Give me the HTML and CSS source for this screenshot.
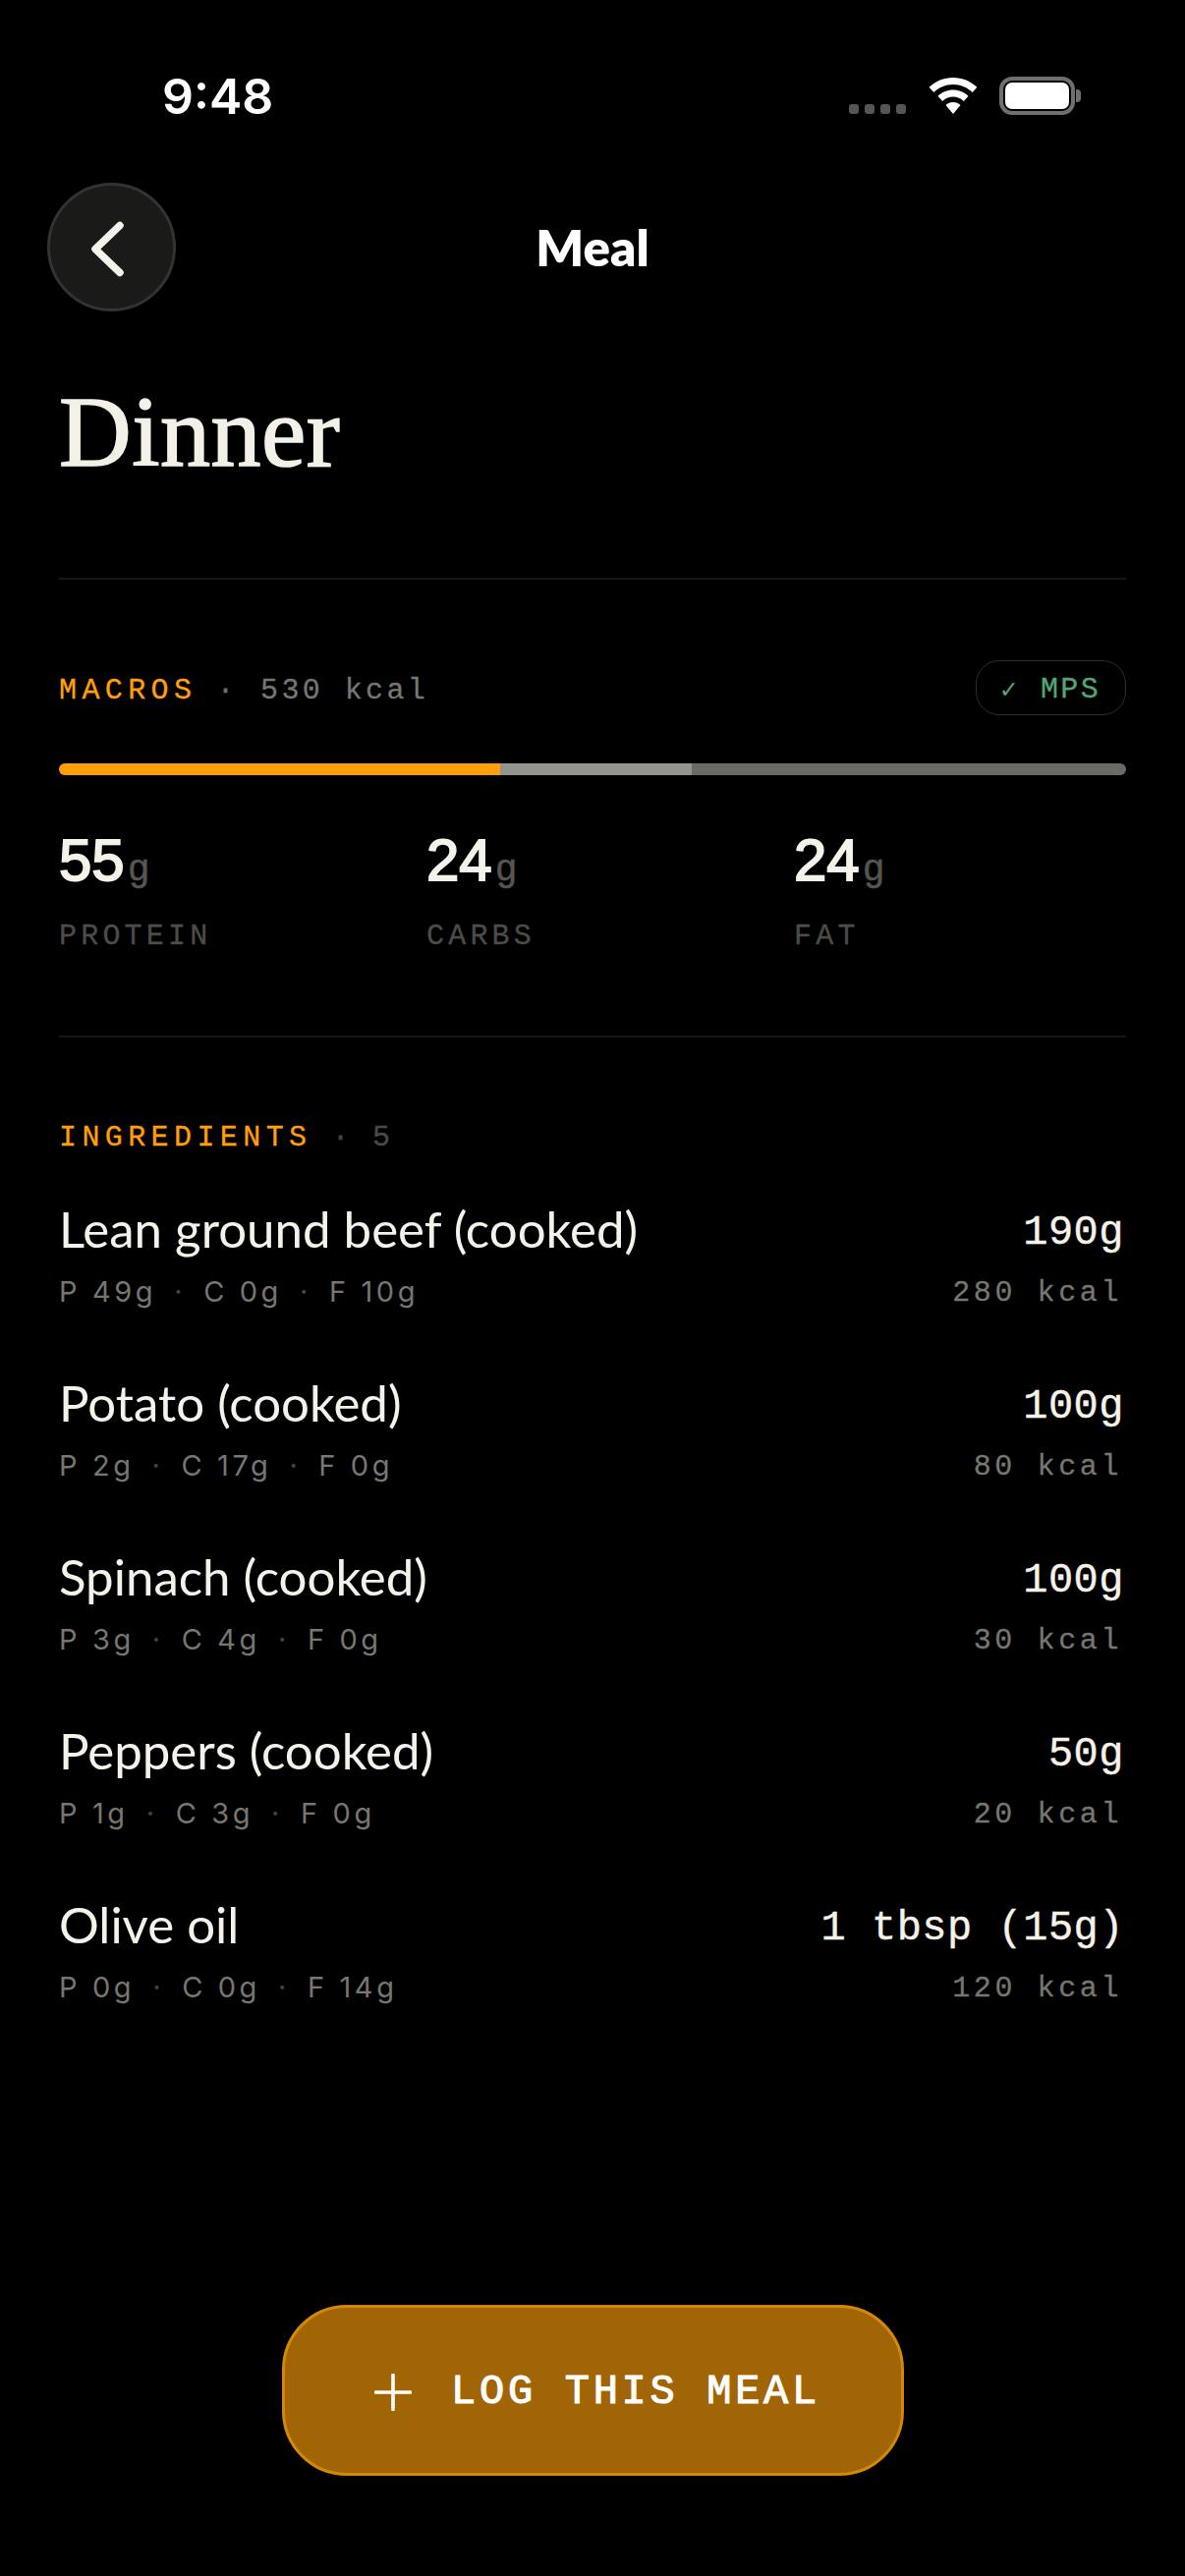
FILE: index.html
```html
<!DOCTYPE html>
<html lang="en">
<head>
<meta charset="utf-8">
<title>Meal</title>
<link rel="stylesheet" href="styles.css">
</head>
<body>
<div class="screen">
  <div class="status">
    <span class="time">9:48</span>
    <div class="status-icons">
      <div class="signal"><i></i><i></i><i></i><i></i></div>
      <svg class="wifi" width="50" height="37" viewBox="0 0 50 37"><path fill="#fff" d="M25 0C15.600 0 7 3.700.6 9.800l4.700 5.200C10.400 10.100 17.300 7 25 7s14.600 3.100 19.700 8l4.700-5.200C43 3.700 34.400 0 25 0Z"/><path fill="#fff" d="M25 12.500c-6 0-11.500 2.400-15.500 6.200l4.700 5.200C17 21.200 20.800 19.500 25 19.500s8 1.700 10.800 4.400l4.700-5.200c-4-3.800-9.500-6.200-15.500-6.200Z"/><path fill="#fff" d="M25 25c-2.900 0-5.600 1.100-7.500 3L25 37l7.500-9c-1.900-1.900-4.600-3-7.500-3Z"/></svg>
      <div class="battery"><div class="battery-body"><div class="battery-fill"></div></div><div class="battery-cap"></div></div>
    </div>
  </div>

  <header class="nav">
    <button class="back" aria-label="Back">
      <svg width="48" height="66" viewBox="0 0 48 66"><path d="M32 10.500 7 34.500l25 24" fill="none" stroke="#f5f2ea" stroke-width="7.500" stroke-linecap="round" stroke-linejoin="round"/></svg>
    </button>
    <div class="nav-title">Meal</div>
    <div></div>
  </header>

  <main class="content">
    <h1 class="title">Dinner</h1>

    <section class="macros">
      <div class="macros-head">
        <div class="label-line shifted">
          <span class="label">MACROS</span>
          <span class="dot">·</span>
          <span class="kcal">530 kcal</span>
        </div>
        <div class="pill"><span class="check">✓</span><span class="pill-text">MPS</span></div>
      </div>
      <div class="bar">
        <div class="seg seg-p"></div>
        <div class="seg seg-c"></div>
        <div class="seg seg-f"></div>
      </div>
      <div class="stats">
        <div class="stat"><div class="stat-num">55<span class="unit">g</span></div><div class="stat-name">PROTEIN</div></div>
        <div class="stat"><div class="stat-num">24<span class="unit">g</span></div><div class="stat-name">CARBS</div></div>
        <div class="stat"><div class="stat-num">24<span class="unit">g</span></div><div class="stat-name">FAT</div></div>
      </div>
    </section>

    <section class="ingredients">
      <div class="label-line">
        <span class="label">INGREDIENTS</span>
        <span class="dot dim">·</span>
        <span class="count">5</span>
      </div>
      <ul class="list">
        <li class="row">
          <div><div class="name">Lean ground beef (cooked)</div><div class="sub">P 49g<b>·</b>C 0g<b>·</b>F 10g</div></div>
          <div class="right"><div class="qty">190g</div><div class="row-kcal">280 kcal</div></div>
        </li>
        <li class="row">
          <div><div class="name">Potato (cooked)</div><div class="sub">P 2g<b>·</b>C 17g<b>·</b>F 0g</div></div>
          <div class="right"><div class="qty">100g</div><div class="row-kcal">80 kcal</div></div>
        </li>
        <li class="row">
          <div><div class="name">Spinach (cooked)</div><div class="sub">P 3g<b>·</b>C 4g<b>·</b>F 0g</div></div>
          <div class="right"><div class="qty">100g</div><div class="row-kcal">30 kcal</div></div>
        </li>
        <li class="row">
          <div><div class="name">Peppers (cooked)</div><div class="sub">P 1g<b>·</b>C 3g<b>·</b>F 0g</div></div>
          <div class="right"><div class="qty">50g</div><div class="row-kcal">20 kcal</div></div>
        </li>
        <li class="row">
          <div><div class="name">Olive oil</div><div class="sub">P 0g<b>·</b>C 0g<b>·</b>F 14g</div></div>
          <div class="right"><div class="qty">1 tbsp (15g)</div><div class="row-kcal">120 kcal</div></div>
        </li>
      </ul>
    </section>
  </main>

  <button class="log">
    <svg width="38" height="38" viewBox="0 0 38 38"><path d="M19 1.500v35M1.500 19h35" fill="none" stroke="#fff" stroke-width="3.600" stroke-linecap="round"/></svg>
    <span>LOG THIS MEAL</span>
  </button>
</div>
</body>
</html>
```

FILE: styles.css
```css
* { box-sizing: border-box; }
html, body { margin: 0; padding: 0; background: #000; }
.screen {
  width: 1206px;
  height: 2622px;
  background: #000;
  color: #f5f2ea;
  display: flex;
  flex-direction: column;
  overflow: hidden;
}

/* status bar */
.status {
  height: 186px;
  padding: 68px 106px 0 165px;
  display: flex;
  justify-content: space-between;
  align-items: flex-start;
}
.time {
  font: 600 50px/60px Inter, sans-serif;
  color: #fff;
}
.status-icons {
  display: flex;
  align-items: flex-start;
  padding-top: 10px;
}
.signal { display: flex; gap: 6px; margin-top: 28px; margin-right: 23px; }
.signal i { width: 10px; height: 10px; border-radius: 3px; background: #555; display: block; }
.wifi { margin-top: 1px; margin-right: 22px; display: block; }
.battery { display: flex; align-items: center; }
.battery-body {
  width: 77px;
  height: 39px;
  border: 4px solid #6f6f6f;
  border-radius: 13px;
  padding: 2px;
}
.battery-fill { height: 100%; background: #fff; border-radius: 7px; }
.battery-cap { width: 5px; height: 13px; background: #6f6f6f; border-radius: 0 4px 4px 0; margin-left: 1px; }

/* nav */
.nav {
  display: grid;
  grid-template-columns: 131px 1fr 131px;
  align-items: center;
  padding: 0 48px;
}
.back {
  width: 131px;
  height: 131px;
  border-radius: 50%;
  background: #1a1a18;
  border: 3px solid #333331;
  padding: 0;
  display: flex;
  align-items: center;
  justify-content: center;
}
.nav-title {
  text-align: center;
  font: 800 51px/60px Lato, sans-serif;
  color: #fff;
}

/* content */
.content { padding: 0 60px; flex: 1; }
.title {
  margin: 63px 0 0;
  font: 400 102px/120px "Liberation Serif", serif;
  letter-spacing: 0.500px;
  color: #f3f0e8;
  -webkit-text-stroke: 1.600px #f3f0e8;
  height: 208px;
}
.macros {
  border-top: 2px solid #161616;
  height: 466px;
  padding-top: 82px;
}
.macros-head {
  display: flex;
  justify-content: space-between;
  align-items: center;
  height: 56px;
}
.label-line {
  display: flex;
  align-items: center;
  gap: 20px;
  font: 400 30px/36px "Liberation Mono", monospace;
  letter-spacing: 3.600px;
  -webkit-text-stroke: 0.3px currentColor;
}
.label-line.shifted { margin-top: 6px; }
.label { color: #ff9f0a; letter-spacing: 5.400px; }
.dot { color: #6f6e69; }
.dot.dim { color: #444; }
.kcal { color: #777670; margin-left: 3px; letter-spacing: 3.400px; }
.count { color: #4a4a48; }
.pill {
  width: 153px;
  height: 56px;
  border: 1.500px solid #2e2e2c;
  border-radius: 24px;
  display: flex;
  align-items: center;
  justify-content: center;
  gap: 22px;
  padding: 4px 2px 0 0;
  color: #52a672;
}
.pill-text {
  font: 400 30px/36px "Liberation Mono", monospace;
  letter-spacing: 2.400px;
  -webkit-text-stroke: 0.3px currentColor;
}
.check { font: 400 24px/36px "DejaVu Sans", sans-serif; }

.bar {
  display: flex;
  height: 12px;
  margin-top: 49px;
  border-radius: 6px;
  overflow: hidden;
}
.seg-p { width: 41.300%; background: #ff9f0a; }
.seg-c { width: 18%; background: #94938c; }
.seg-f { flex: 1; background: #6b6a64; }

.stats {
  display: grid;
  grid-template-columns: repeat(3, 1fr);
  gap: 36px;
  margin-top: 52px;
}
.stat-num {
  font: 400 60px/70px "Liberation Sans", sans-serif;
  color: #f5f2ea;
  -webkit-text-stroke: 1.800px #f5f2ea;
}
.unit {
  font: 400 38px/40px "Liberation Mono", monospace;
  color: #555553;
  margin-left: 3px;
  -webkit-text-stroke: 0.5px #555553;
}
.stat-name {
  margin-top: 24px;
  font: 400 30px/36px "Liberation Mono", monospace;
  letter-spacing: 4.200px;
  color: #4c4c4a;
  -webkit-text-stroke: 0.3px currentColor;
}

.ingredients {
  border-top: 2px solid #161616;
  padding-top: 84px;
}
.list { list-style: none; margin: 45px 0 0; padding: 0; }
.row {
  display: flex;
  justify-content: space-between;
  height: 177px;
}
.name {
  font: 400 51px/60px Lato, sans-serif;
  color: #f5f2ea;
}
.sub {
  margin-top: 16px;
  font: 400 29px/36px Inter, sans-serif;
  letter-spacing: 3.600px;
  color: #777670;
}
.sub b { font-weight: 400; color: #444; margin: 0 18px; }
.right { text-align: right; }
.qty {
  margin-top: 4px;
  margin-right: 2px;
  font: 400 42px/60px "Liberation Mono", monospace;
  letter-spacing: 0.500px;
  color: #f5f2ea;
  -webkit-text-stroke: 0.4px #f5f2ea;
}
.row-kcal {
  margin-top: 13px;
  margin-right: 4px;
  font: 400 30px/36px "Liberation Mono", monospace;
  letter-spacing: 3.600px;
  color: #777670;
  -webkit-text-stroke: 0.3px currentColor;
}

/* log button */
.log {
  align-self: center;
  flex: none;
  width: 633px;
  height: 174px;
  margin-bottom: 102px;
  background: #a16506;
  border: 3px solid #d48806;
  border-radius: 66px;
  display: flex;
  align-items: center;
  justify-content: center;
  gap: 40px;
  font: 400 42px/50px "Liberation Mono", monospace;
  letter-spacing: 3.700px;
  color: #fff;
  -webkit-text-stroke: 1.100px #fff;
  padding: 3px 0 0 10px;
}
```
